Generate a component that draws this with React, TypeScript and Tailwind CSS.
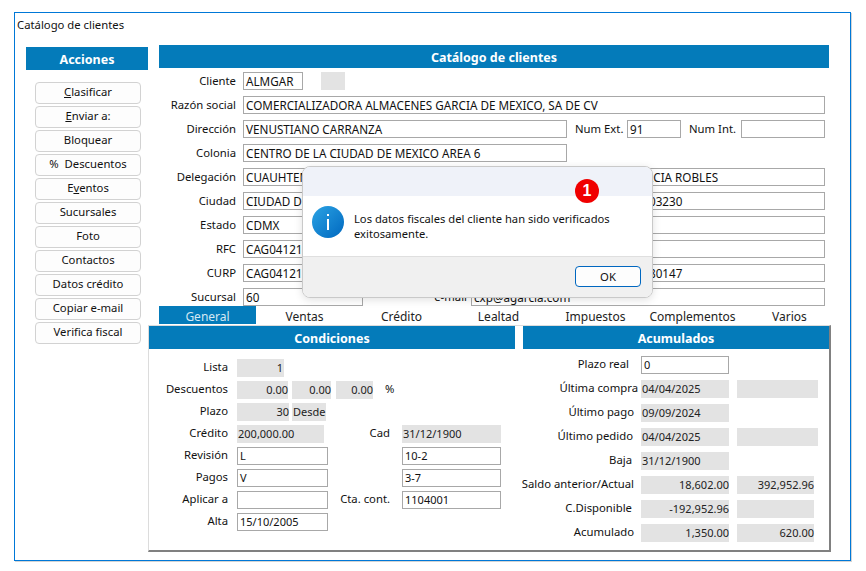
import React from "react";

const acciones = ["Clasificar", "Enviar a:", "Bloquear", "%  Descuentos", "Eventos", "Sucursales", "Foto", "Contactos", "Datos crédito", "Copiar e-mail", "Verifica fiscal"];
const tabs = ["General", "Ventas", "Crédito", "Lealtad", "Impuestos", "Complementos", "Varios"];

function Input({ className = "", children }: { className?: string; children?: React.ReactNode }) {
  return <div className={`h-[18px] border border-[#a8a8a8] bg-white px-[2px] leading-[16px] whitespace-nowrap overflow-hidden text-[#111] ${className}`}>{children}</div>;
}

function Gray({ className = "", children }: { className?: string; children?: React.ReactNode }) {
  return <div className={`h-[18px] bg-[#e3e3e3] leading-[18px] whitespace-nowrap text-[#222] ${className}`}>{children}</div>;
}

function Label({ className = "", children }: { className?: string; children: React.ReactNode }) {
  return <div className={`text-right text-[11.3px] whitespace-nowrap leading-[18px] text-[#111] ${className}`}>{children}</div>;
}

function FormRow({ label, children }: { label: string; children: React.ReactNode }) {
  return (
    <div className="flex h-[18px] text-[11.7px]">
      <Label className="w-[88px] mr-[7px]">{label}</Label>
      {children}
    </div>
  );
}

function Sidebar() {
  return (
    <div className="w-[122px] ml-[11px] pt-[16px]">
      <div className="h-[23px] bg-[#047bba] text-white font-bold text-[12.5px] leading-[25px] text-center">Acciones</div>
      <div className="mt-[12px] ml-[9px] w-[106px] flex flex-col gap-[2px]">
        {acciones.map((a) => (
          <button key={a} className="h-[22px] pb-[2px] border border-[#d2d2d2] rounded-[4px] bg-[#fdfdfd] text-center leading-[18px] text-[#111] whitespace-pre">
            {a === "Clasificar" ? <><u>C</u>lasificar</> : a === "Enviar a:" ? <><u>E</u>nviar a:</> : a === "Eventos" ? <>E<u>v</u>entos</> : a}
          </button>
        ))}
      </div>
    </div>
  );
}

function ClienteForm() {
  return (
    <div className="ml-[11px]">
      <div className="w-[670px] h-[23px] bg-[#047bba] text-white font-bold text-[12.5px] leading-[25px] text-center">Catálogo de clientes</div>
      <div className="-ml-[11px] mt-[4px] flex flex-col gap-[6px]">
        <FormRow label="Cliente">
          <Input className="w-[60px]">ALMGAR</Input>
          <div className="ml-[18px] w-[24px] h-[18px] bg-[#e3e3e3]" />
        </FormRow>
        <FormRow label="Razón social">
          <Input className="w-[582px]">COMERCIALIZADORA ALMACENES GARCIA DE MEXICO, SA DE CV</Input>
        </FormRow>
        <FormRow label="Dirección">
          <Input className="w-[324px]">VENUSTIANO CARRANZA</Input>
          <Label className="ml-[8px] w-[46px] text-left">Num Ext.</Label>
          <Input className="ml-[6px] w-[54px]">91</Input>
          <Label className="ml-[8px] w-[46px] text-left">Num Int.</Label>
          <Input className="ml-[6px] w-[84px]" />
        </FormRow>
        <FormRow label="Colonia">
          <Input className="w-[324px]">CENTRO DE LA CIUDAD DE MEXICO AREA 6</Input>
        </FormRow>
        <FormRow label="Delegación">
          <Input className="w-[324px]">CUAUHTEMOC</Input>
          <Input className="ml-[60px] w-[198px] pl-[2px]">GARCIA ROBLES</Input>
        </FormRow>
        <FormRow label="Ciudad">
          <Input className="w-[324px]">CIUDAD DE MEXICO</Input>
          <Input className="ml-[60px] w-[198px] pl-[21px]">03230</Input>
        </FormRow>
        <FormRow label="Estado">
          <Input className="w-[324px]">CDMX</Input>
          <Input className="ml-[60px] w-[198px]" />
        </FormRow>
        <FormRow label="RFC">
          <Input className="w-[324px]">CAG041217</Input>
          <Input className="ml-[60px] w-[198px]" />
        </FormRow>
        <FormRow label="CURP">
          <Input className="w-[324px]">CAG041217</Input>
          <Input className="ml-[60px] w-[198px] pl-[21px]">80147</Input>
        </FormRow>
        <FormRow label="Sucursal">
          <Input className="w-[120px]">60</Input>
          <Label className="w-[104px]">e-mail</Label>
          <Input className="ml-[4px] w-[354px]">cxp@agarcia.com</Input>
        </FormRow>
      </div>
    </div>
  );
}

function Tabs() {
  return (
    <div className="ml-[11px] flex h-[18px] text-[12px]">
      {tabs.map((t, i) => (
        <div key={t} className={`w-[97px] shrink-0 text-center leading-[22px] h-[18px] ${i === 0 ? "bg-[#047bba] text-[#d5e8f3]" : "text-[#222]"}`}>{t}</div>
      ))}
    </div>
  );
}

function CondRow({ label, children }: { label: string; children: React.ReactNode }) {
  return (
    <div className="flex h-[18px]">
      <Label className="w-[79px] mr-[9px] -mt-px">{label}</Label>
      {children}
    </div>
  );
}

function Condiciones() {
  return (
    <div className="w-[366px] text-[11px]">
      <div className="h-[23px] bg-[#047bba] text-white font-bold text-[12.5px] leading-[25px] text-center">Condiciones</div>
      <div className="mt-[10px] flex flex-col gap-[4px]">
        <CondRow label="Lista">
          <Gray className="w-[47px] text-right pr-[1px]">1</Gray>
        </CondRow>
        <CondRow label="Descuentos">
          <Gray className="w-[51px] text-right">0.00</Gray>
          <Gray className="ml-[4px] w-[39px] text-right">0.00</Gray>
          <Gray className="ml-[5px] w-[37px] text-right">0.00</Gray>
          <Label className="ml-[12px] -mt-px">%</Label>
        </CondRow>
        <CondRow label="Plazo">
          <Gray className="w-[52px] text-right">30</Gray>
          <Gray className="ml-[3px] w-[34px] pl-[1px]">Desde</Gray>
        </CondRow>
        <CondRow label="Crédito">
          <Gray className="w-[87px] pl-[1px]">200,000.00</Gray>
          <Label className="ml-[4px] w-[62px] -mt-px">Cad</Label>
          <Gray className="ml-[12px] w-[99px] pl-[1px]">31/12/1900</Gray>
        </CondRow>
        <CondRow label="Revisión">
          <Input className="w-[91px]">L</Input>
          <div className="w-[74px]" />
          <Input className="w-[99px]">10-2</Input>
        </CondRow>
        <CondRow label="Pagos">
          <Input className="w-[91px]">V</Input>
          <div className="w-[74px]" />
          <Input className="w-[99px]">3-7</Input>
        </CondRow>
        <CondRow label="Aplicar a">
          <Input className="w-[91px]" />
          <Label className="w-[62px] -mt-px">Cta. cont.</Label>
          <Input className="ml-[12px] w-[99px]">1104001</Input>
        </CondRow>
        <CondRow label="Alta">
          <Input className="w-[91px]">15/10/2005</Input>
        </CondRow>
      </div>
    </div>
  );
}

function AcumRow({ label, pad, children }: { label: string; pad: string; children: React.ReactNode }) {
  return (
    <div className="flex h-[18px]">
      <div className={`w-[118px] flex justify-end ${pad}`}>
        <Label className="-mt-px">{label}</Label>
      </div>
      {children}
    </div>
  );
}

function Acumulados() {
  return (
    <div className="w-[306px] ml-[8px] text-[11px]">
      <div className="h-[23px] bg-[#047bba] text-white font-bold text-[12.5px] leading-[25px] text-center">Acumulados</div>
      <div className="mt-[7px] flex flex-col gap-[6px]">
        <AcumRow label="Plazo real" pad="pr-[12px]">
          <Input className="w-[88px]">0</Input>
        </AcumRow>
        <AcumRow label="Última compra" pad="pr-[3px]">
          <Gray className="w-[88px] pl-[1px]">04/04/2025</Gray>
          <Gray className="ml-[8px] w-[81px]" />
        </AcumRow>
        <AcumRow label="Último pago" pad="pr-[7px]">
          <Gray className="w-[88px] pl-[1px]">09/09/2024</Gray>
        </AcumRow>
        <AcumRow label="Último pedido" pad="pr-[8px]">
          <Gray className="w-[88px] pl-[1px]">04/04/2025</Gray>
          <Gray className="ml-[8px] w-[81px]" />
        </AcumRow>
        <AcumRow label="Baja" pad="pr-[9px]">
          <Gray className="w-[88px] pl-[1px]">31/12/1900</Gray>
        </AcumRow>
        <AcumRow label="Saldo anterior/Actual" pad="pr-[7px]">
          <Gray className="w-[88px] text-right">18,602.00</Gray>
          <Gray className="ml-[8px] w-[77px] text-right">392,952.96</Gray>
        </AcumRow>
        <AcumRow label="C.Disponible" pad="pr-[9px]">
          <Gray className="w-[88px] text-right">-192,952.96</Gray>
          <Gray className="ml-[8px] w-[77px]" />
        </AcumRow>
        <AcumRow label="Acumulado" pad="pr-[7px]">
          <Gray className="w-[88px] text-right">1,350.00</Gray>
          <Gray className="ml-[8px] w-[77px] text-right">620.00</Gray>
        </AcumRow>
      </div>
    </div>
  );
}

function InfoIcon() {
  return (
    <svg width="32" height="32" viewBox="0 0 32 32" className="shrink-0">
      <defs>
        <linearGradient id="infoFill" x1="0" y1="0" x2="1" y2="1">
          <stop offset="0" stopColor="#2ba3e4" />
          <stop offset="1" stopColor="#0068bf" />
        </linearGradient>
      </defs>
      <circle cx="16" cy="16" r="16" fill="url(#infoFill)" />
      <rect x="15" y="8" width="2" height="2" fill="#fff" />
      <rect x="15" y="13" width="2" height="11" fill="#fff" />
    </svg>
  );
}

function Dialog() {
  return (
    <div className="absolute left-[302px] top-[166px] w-[351px] h-[132px] flex flex-col rounded-[8px] border border-[#c9c9c9] bg-white overflow-hidden shadow-[0_2px_8px_rgba(0,0,0,0.12)]">
      <div className="h-[29px] bg-[#eff2f9]" />
      <div className="h-[60px] flex pl-[9px] pt-[10px]">
        <InfoIcon />
        <div className="ml-[10px] pt-[5px] text-[11.2px] leading-[15px] text-[#111] w-[290px]">Los datos fiscales del cliente han sido verificados exitosamente.</div>
      </div>
      <div className="flex-1 bg-[#f0f0f0] border-t border-[#dfdfdf] flex justify-end pt-[9px] pr-[11px]">
        <button className="w-[66px] h-[21px] border border-[#0067c0] rounded-[4px] bg-[#fdfdfd] leading-[18px] text-[#111]">OK</button>
      </div>
    </div>
  );
}

export default function App() {
  return (
    <div className="relative w-[866px] h-[571px] bg-white overflow-hidden text-[11.3px]" style={{ fontFamily: '"Noto Sans", sans-serif' }}>
      <div className="absolute left-[14px] top-[12px] w-[837px] h-[549px] border border-[#0078d7] shadow-[1px_1px_0_#d4d4d4] flex flex-col">
        <div className="pl-[2px] pt-[3px] h-[18px] leading-[18px] text-[#111]">Catálogo de clientes</div>
        <div className="flex">
          <Sidebar />
          <div className="w-[683px] pt-[14px]">
            <ClienteForm />
            <Tabs />
            <div className="mt-px h-[227px] border border-[#dcdcdc] border-r-2 border-b-2 border-r-[#808080] border-b-[#808080] flex">
              <Condiciones />
              <Acumulados />
            </div>
          </div>
        </div>
      </div>
      <Dialog />
      <div className="absolute left-[575px] top-[179px] w-[24px] h-[24px] rounded-full bg-[#f00000] text-white font-bold text-[16px] leading-[24px] text-center" style={{ fontFamily: '"Liberation Sans", sans-serif' }}>1</div>
    </div>
  );
}
